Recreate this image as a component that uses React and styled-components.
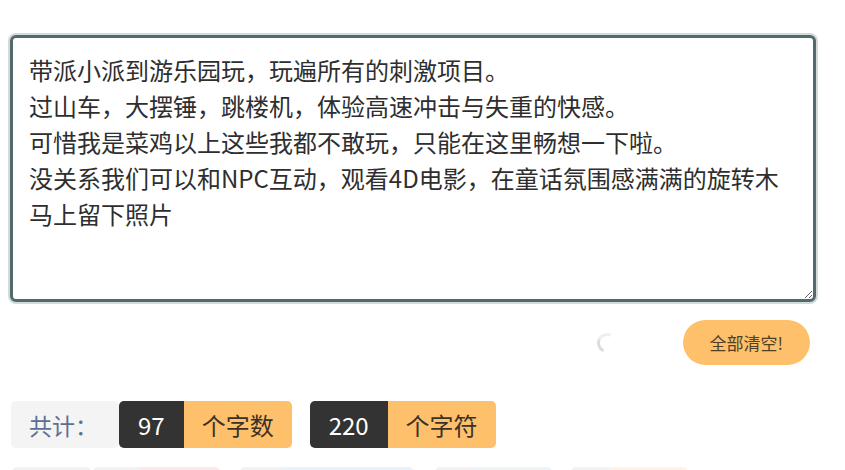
import React, { useEffect, useRef } from 'react'
import styled, { createGlobalStyle } from 'styled-components'

const GlobalStyle = createGlobalStyle`
   html, body {
      margin: 0;
      padding: 0;
      background: #fff;
   }

   body {
      font-family: "Noto Sans CJK SC", "Noto Sans", sans-serif;
      color: #333;
   }
`

const Page = styled.div`
   padding: 35px 0 0 10px;
   width: 806px;
`

const Editor = styled.textarea`
   display: block;
   box-sizing: border-box;
   width: 806px;
   height: 267px;
   margin: 0;
   padding: 14px 16px;
   border: 3px solid #52696d;
   border-radius: 6px;
   box-shadow: 0 0 0 2px #d3dadb;
   outline: none;
   font-family: inherit;
   font-size: 24px;
   line-height: 36px;
   color: #2e2e2e;
   caret-color: #222;
   background: #fff;
   resize: both;
`

const Actions = styled.div`
   display: flex;
   align-items: center;
   justify-content: flex-end;
   gap: 66px;
   margin-top: 18px;
   padding-right: 6px;
`

const Spinner = styled.span`
   display: block;
   width: 14px;
   height: 14px;
   border: 3px solid transparent;
   border-left-color: #dcdcdc;
   border-top-color: #eeeeee;
   border-radius: 50%;
   transform: rotate(-20deg);
`

const ClearButton = styled.button`
   height: 45px;
   padding: 0 27px;
   border: none;
   border-radius: 23px;
   background: #ffc06c;
   color: #4f3f25;
   font-family: inherit;
   font-size: 17px;
   cursor: pointer;
`

const StatRow = styled.div`
   display: flex;
   align-items: stretch;
   margin-top: 36px;
   padding-left: 1px;
`

const Label = styled.div`
   display: flex;
   align-items: center;
   box-sizing: border-box;
   width: ${(p) => p.$width || 108}px;
   height: 47px;
   padding-left: 18px;
   border-radius: 5px;
   background: ${(p) => p.$bg || '#f4f4f5'};
   color: #5f6f91;
   font-size: 23px;
`

const Group = styled.div`
   display: flex;
   height: 47px;
   margin-left: ${(p) => p.$gap || 0}px;
   border-radius: 5px;
   overflow: hidden;
   font-size: 24px;
`

const Num = styled.div`
   display: flex;
   align-items: center;
   justify-content: center;
   box-sizing: border-box;
   padding: 0 19px;
   background: ${(p) => p.$bg || '#333'};
   color: #fff;
   ${(p) => p.$width && `width: ${p.$width}px; padding: 0;`}
`

const Unit = styled.div`
   display: flex;
   align-items: center;
   justify-content: center;
   box-sizing: border-box;
   padding: 0 18px;
   background: ${(p) => p.$bg || '#ffc06c'};
   color: #3a3227;
   ${(p) => p.$width && `width: ${p.$width}px; padding: 0;`}
`

const FadeRow = styled(StatRow)`
   margin-top: 19px;
   padding-left: 2px;
`

const text = [
   '带派小派到游乐园玩，玩遍所有的刺激项目。',
   '过山车，大摆锤，跳楼机，体验高速冲击与失重的快感。',
   '可惜我是菜鸡以上这些我都不敢玩，只能在这里畅想一下啦。',
   '没关系我们可以和NPC互动，观看4D电影，在童话氛围感满满的旋转木马上留下照片',
].join('\n')

export default function App() {
   const ref = useRef(null)

   useEffect(() => {
      const el = ref.current
      if (el) {
         el.focus()
         el.setSelectionRange(el.value.length, el.value.length)
      }
   }, [])

   return (
      <>
         <GlobalStyle />
         <Page>
            <Editor ref={ref} defaultValue={text} spellCheck={false} />

            <Actions>
               <Spinner />
               <ClearButton>全部清空!</ClearButton>
            </Actions>

            <StatRow>
               <Label>共计：</Label>
               <Group>
                  <Num>97</Num>
                  <Unit>个字数</Unit>
               </Group>
               <Group $gap={18}>
                  <Num>220</Num>
                  <Unit>个字符</Unit>
               </Group>
            </StatRow>

            <FadeRow>
               <Label $bg="#f2f2f2" $width={79} />
               <Group $gap={2}>
                  <Num $bg="#f2f2f2" $width={47} />
                  <Unit $bg="#fde9ed" $width={80} />
               </Group>
               <Group $gap={20}>
                  <Num $bg="#f2f2f2" $width={45} />
                  <Unit $bg="#e9f3fc" $width={129} />
               </Group>
               <Group $gap={21}>
                  <Num $bg="#f2f2f2" $width={35} />
                  <Unit $bg="#eef4f6" $width={82} />
               </Group>
               <Group $gap={19}>
                  <Num $bg="#f2f2f2" $width={38} />
                  <Unit $bg="#fff3e6" $width={79} />
               </Group>
            </FadeRow>
         </Page>
      </>
   )
}
